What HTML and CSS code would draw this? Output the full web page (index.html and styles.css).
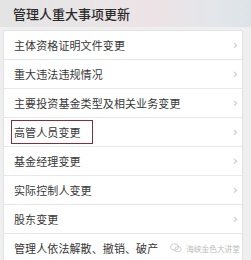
FILE: index.html
```html
<!DOCTYPE html>
<html lang="zh">
<head>
<meta charset="utf-8">
<link rel="stylesheet" href="styles.css">
</head>
<body>
<div class="header">管理人重大事项更新</div>
<div class="card">
  <div class="row"><span class="label">主体资格证明文件变更</span><span class="chev">›</span></div>
  <div class="row"><span class="label">重大违法违规情况</span><span class="chev">›</span></div>
  <div class="row"><span class="label">主要投资基金类型及相关业务变更</span><span class="chev">›</span></div>
  <div class="row"><span class="label boxed">高管人员变更</span><span class="chev">›</span></div>
  <div class="row"><span class="label">基金经理变更</span><span class="chev">›</span></div>
  <div class="row"><span class="label">实际控制人变更</span><span class="chev">›</span></div>
  <div class="row"><span class="label">股东变更</span><span class="chev">›</span></div>
  <div class="row last"><span class="label">管理人依法解散、撤销、破产</span>
    <span class="mark">
      <svg width="12" height="10" viewBox="0 0 12 10"><ellipse cx="4.5" cy="4" rx="4" ry="3.2" fill="none" stroke="#c8c8c8" stroke-width="0.9"/><ellipse cx="8" cy="6.2" rx="3.2" ry="2.6" fill="none" stroke="#c8c8c8" stroke-width="0.9"/></svg>
      <span class="mark-text">海峡金色大讲堂</span>
    </span>
  </div>
</div>
</body>
</html>
```
FILE: styles.css
```css
html, body {
  margin: 0;
  padding: 0;
}
body {
  width: 251px;
  height: 260px;
  overflow: hidden;
  background: #efefef;
  font-family: "Noto Sans CJK SC", "Noto Sans", sans-serif;
}
.header {
  height: 27px;
  line-height: 27px;
  padding-left: 13px;
  font-size: 13px;
  font-weight: 500;
  color: #2a2a2a;
  background: linear-gradient(90deg, #e4e4e4 0%, #e9e5e6 35%, #ede3e6 60%, #e3e6ea 85%, #dde3e8 100%);
}
.card {
  margin: 3px 8px 0 3px;
  background: #ffffff;
  border: 1px solid #e2e2e2;
  border-radius: 2px;
}
.row {
  height: 28px;
  border-bottom: 1px solid #e8e8e8;
  display: flex;
  align-items: center;
  justify-content: space-between;
  padding: 0 4px 0 10px;
}
.row.last {
  border-bottom: none;
}
.label {
  font-size: 11px;
  color: #383838;
  letter-spacing: 0.1px;
  white-space: nowrap;
}
.boxed {
  margin-left: -3px;
  padding: 4px 11px 4px 2px;
  border: 1.5px solid #8a2b3c;
  line-height: 14px;
}
.chev {
  font-family: "DejaVu Sans", sans-serif;
  font-size: 13px;
  color: #c4c4c4;
  line-height: 1;
  margin-top: -2px;
}
.mark {
  display: flex;
  align-items: center;
  gap: 4px;
  flex-shrink: 0;
  margin-right: -2px;
}
.mark-text {
  font-size: 7.7px;
  color: #bdbdbd;
  white-space: nowrap;
}
```
